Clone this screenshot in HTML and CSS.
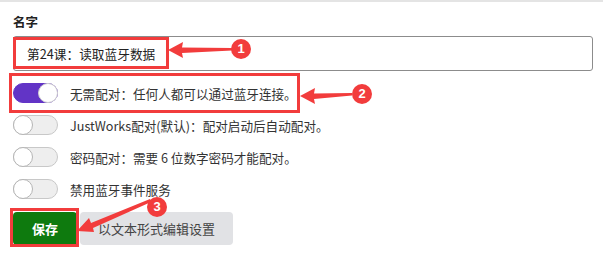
FILE: index.html
```html
<!DOCTYPE html>
<html lang="zh">
<head>
<meta charset="utf-8">
<link rel="stylesheet" href="styles.css">
</head>
<body>
<div class="panel">
  <div class="label">名字</div>
  <div class="input">第24课：读取蓝牙数据</div>
  <div class="rows">
    <div class="row"><span class="toggle on"><span class="knob"></span></span><span class="txt">无需配对：任何人都可以通过蓝牙连接。</span></div>
    <div class="row"><span class="toggle"><span class="knob"></span></span><span class="txt">JustWorks配对(默认)：配对启动后自动配对。</span></div>
    <div class="row"><span class="toggle"><span class="knob"></span></span><span class="txt">密码配对：需要 6 位数字密码才能配对。</span></div>
    <div class="row"><span class="toggle"><span class="knob"></span></span><span class="txt">禁用蓝牙事件服务</span></div>
  </div>
  <div class="buttons">
    <button class="btn save">保存</button>
    <button class="btn edit">以文本形式编辑设置</button>
  </div>
</div>

<div class="mark m1"></div>
<div class="mark m2"></div>
<div class="mark m3"></div>
<svg class="arrows" width="603" height="257" viewBox="0 0 603 257">
  <polygon points="168,50 183,42 182,47.5 232,48 232,50.5 182,53 183,58" fill="#f23c3c"/>
  <polygon points="300,96 315,88 314,93.5 352,93 352,95.5 314,99 315,104" fill="#f23c3c"/>
  <polygon points="77,231 89,218 91,223 150,199 151,202 93,228 94,232" fill="#f23c3c"/>
</svg>
<div class="badge b1">1</div>
<div class="badge b2">2</div>
<div class="badge b3">3</div>
</body>
</html>
```

FILE: styles.css
```css
* { box-sizing: border-box; }
html, body { margin: 0; padding: 0; background: #fff; }
body {
  width: 603px;
  height: 257px;
  overflow: hidden;
  position: relative;
  font-family: "Noto Sans CJK SC", "Noto Sans", sans-serif;
  color: #333;
}
.panel {
  border-top: 2px solid #e4e4e4;
  padding: 12px 10px 0 13px;
}
.label {
  font-size: 12.5px;
  font-weight: bold;
  line-height: 16px;
  color: #222;
}
.input {
  margin-top: 6px;
  height: 35px;
  border: 1px solid #8c8c8c;
  border-radius: 3px;
  padding-left: 13px;
  font-size: 12.7px;
  line-height: 33px;
  color: #222;
}
.rows { margin-top: 6px; }
.row {
  height: 32px;
  display: flex;
  align-items: center;
  gap: 12px;
  font-size: 12.6px;
  color: #333;
}
.toggle {
  width: 45px;
  height: 20px;
  border-radius: 10px;
  background: #eeeeee;
  border: 1px solid #c8c8c8;
  display: flex;
  align-items: center;
  justify-content: flex-start;
  flex-shrink: 0;
}
.toggle .knob {
  width: 20px;
  height: 20px;
  margin-left: -1px;
  border-radius: 50%;
  background: #fff;
  border: 1px solid #b5b5b5;
}
.toggle.on {
  background: #6234c6;
  border-color: #6234c6;
  justify-content: flex-end;
}
.toggle.on .knob {
  margin-left: 0;
  margin-right: -1px;
  border-color: #cfcfcf;
}
.buttons {
  margin-top: 7px;
  display: flex;
  gap: 3px;
}
.btn {
  height: 33px;
  border: none;
  border-radius: 4px;
  font-family: "Noto Sans CJK SC", "Noto Sans", sans-serif;
  font-size: 13px;
  padding: 0;
}
.save {
  width: 64px;
  background: #0e7a0e;
  color: #fff;
  font-weight: bold;
}
.edit {
  width: 153px;
  background: #e1e2e5;
  color: #444;
}
.mark {
  position: absolute;
  border: 3px solid #f23c3c;
}
.m1 { left: 13px; top: 37px; width: 156px; height: 32px; }
.m2 { left: 9px; top: 73px; width: 291px; height: 40px; }
.m3 { left: 10px; top: 208px; width: 69px; height: 39px; }
.arrows { position: absolute; left: 0; top: 0; }
.badge {
  position: absolute;
  width: 20px;
  height: 20px;
  border-radius: 50%;
  background: #f23c3c;
  color: #fff;
  font-family: "Liberation Sans", Arial, sans-serif;
  font-size: 13px;
  font-weight: bold;
  line-height: 20px;
  text-align: center;
}
.b1 { left: 231px; top: 39px; }
.b2 { left: 352px; top: 84px; }
.b3 { left: 147px; top: 197px; }
```
